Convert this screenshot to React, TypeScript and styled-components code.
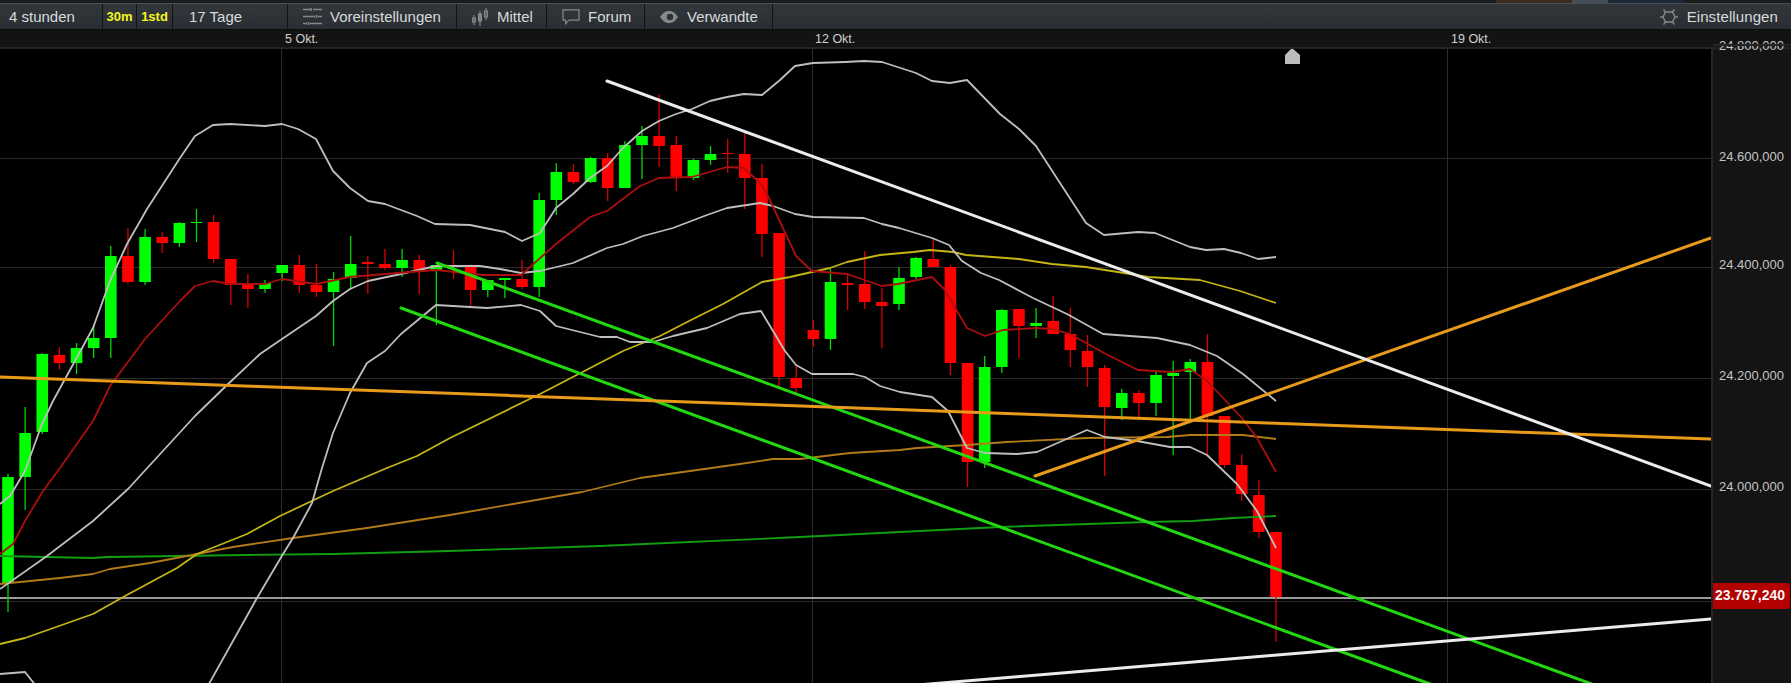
import React from "react";
import styled, { createGlobalStyle } from "styled-components";

const Global = createGlobalStyle`
  html, body { margin: 0; padding: 0; background: #000; }
  body { font-family: "Liberation Sans", Arial, sans-serif; }
`;

const Page = styled.div`
  width: 1791px;
  height: 683px;
  overflow: hidden;
  background: #000;
  display: flex;
  flex-direction: column;
`;

const TopStrip = styled.div`
  height: 3px;
  background: #1b1c1d;
  display: flex;
  justify-content: flex-end;
  border-bottom: 1px solid #4a4e51;
  box-sizing: content-box;
`;

const StripTab = styled.div<{ $w: number; $c: string }>`
  width: ${(p) => p.$w}px;
  background: ${(p) => p.$c};
`;

const StripEnd = styled.div`
  width: 107px;
`;

const Toolbar = styled.div`
  height: 25px;
  display: flex;
  align-items: stretch;
  background: linear-gradient(#32373b, #2a2e32);
  border-bottom: 1px solid #0c0c0c;
  color: #d6dadc;
  font-size: 15px;
`;

const Section = styled.div<{ $w: number; $pad?: number; $gap?: number }>`
  width: ${(p) => p.$w}px;
  box-sizing: border-box;
  padding-left: ${(p) => p.$pad ?? 0}px;
  display: flex;
  align-items: center;
  gap: ${(p) => p.$gap ?? 0}px;
  border-right: 1px solid #101214;
`;

const YellowSection = styled(Section)`
  justify-content: center;
  color: #f6f61e;
  font-weight: 700;
  font-size: 13px;
`;

const Spacer = styled.div`
  flex: 1;
`;

const RightSection = styled.div`
  display: flex;
  align-items: center;
  gap: 9px;
  padding-right: 13px;
  letter-spacing: 0.1px;
`;

const Icon = styled.svg`
  display: block;
  flex: none;
  fill: none;
  stroke: #85898c;
`;

const DateBar = styled.div`
  height: 17px;
  background: #131313;
  border-bottom: 2px solid #242424;
  position: relative;
  color: #cfcfcf;
  font-size: 12.5px;
`;

const DateLabel = styled.span<{ $x: number }>`
  position: absolute;
  left: ${(p) => p.$x}px;
  top: 1px;
  line-height: 16px;
`;

const Main = styled.div`
  flex: 1;
  display: flex;
  min-height: 0;
`;

const Plot = styled.svg`
  display: block;
  flex: none;
  width: 1711px;
  height: 635px;
  filter: blur(0.35px);
`;

const Axis = styled.div`
  flex: 1;
  position: relative;
  background: #141414;
  border-left: 2px solid #272727;
  box-sizing: border-box;
  color: #c4c4c4;
  font-size: 13px;
`;

const Price = styled.span<{ $y: number }>`
  position: absolute;
  left: 6px;
  top: ${(p) => p.$y - 48 - 8}px;
  line-height: 16px;
`;

const ClippedPrice = styled(Price)`
  &::after {
    content: "";
    position: absolute;
    left: -6px;
    right: -8px;
    top: 6px;
    height: 2px;
    background: #242424;
  }
`;

const Current = styled.span`
  position: absolute;
  left: 0;
  right: 1px;
  top: 534px;
  height: 26px;
  background: #b30000;
  border-radius: 0 3px 3px 0;
  color: #f4f4f4;
  font-size: 14px;
  font-weight: 700;
  line-height: 25px;
  padding-left: 2px;
  box-sizing: border-box;
`;

const GridLine = styled.line`
  stroke: #2b2b2b;
  stroke-width: 1;
`;

const Wick = styled.line<{ $up: boolean }>`
  stroke: ${(p) => (p.$up ? "#00d800" : "#d80000")};
  stroke-width: 1.3;
`;

const Body = styled.rect<{ $up: boolean }>`
  fill: ${(p) => (p.$up ? "#00ff00" : "#ff0000")};
`;

const Curve = styled.polyline<{ $c: string }>`
  fill: none;
  stroke: ${(p) => p.$c};
  stroke-width: 1.8;
  stroke-linejoin: round;
`;

const Trend = styled.line<{ $c: string }>`
  stroke: ${(p) => p.$c};
  stroke-width: 3;
  stroke-linecap: round;
`;

const PriceLine = styled.line`
  stroke: #9a9a9a;
  stroke-width: 1.8;
`;

const Marker = styled.polygon`
  fill: #bcbcbc;
`;

type C = [number, number, number, number, 0 | 1];
const candles: C[] = [
  [473, 476, 582, 611, 1], [406, 432, 476, 509, 1], [352, 353, 431, 433, 1], [346, 354, 362, 369, 0],
  [342, 347, 362, 373, 1], [323, 337, 347, 357, 1], [245, 255, 337, 357, 1], [227, 255, 281, 283, 0],
  [228, 236, 281, 284, 1], [231, 236, 242, 252, 0], [221, 222, 242, 246, 1], [208, 221, 222, 241, 1],
  [214, 221, 258, 262, 0], [258, 258, 284, 304, 0], [273, 284, 288, 307, 0], [279, 282, 288, 292, 1],
  [264, 264, 272, 280, 1], [254, 264, 284, 292, 0], [263, 284, 291, 296, 0], [271, 278, 291, 345, 1],
  [235, 263, 277, 289, 1], [255, 261, 263, 293, 0], [248, 263, 267, 269, 0], [248, 259, 267, 276, 1],
  [254, 259, 271, 293, 0], [264, 264, 269, 324, 1], [249, 264, 265, 278, 0], [266, 266, 289, 305, 0],
  [279, 279, 289, 296, 1], [277, 277, 279, 297, 1], [259, 278, 286, 288, 0], [192, 199, 286, 296, 1],
  [162, 171, 199, 214, 1], [163, 171, 181, 183, 0], [156, 157, 181, 182, 1], [152, 157, 187, 200, 0],
  [140, 144, 187, 187, 1], [125, 135, 144, 178, 1], [93, 135, 145, 166, 0], [135, 144, 177, 190, 0],
  [158, 159, 177, 179, 1], [145, 153, 159, 164, 1], [138, 152, 153, 172, 0], [132, 153, 177, 208, 0],
  [163, 177, 233, 256, 0], [232, 232, 376, 386, 0], [364, 377, 387, 392, 0], [319, 329, 338, 346, 0],
  [268, 281, 338, 349, 1], [272, 282, 284, 309, 0], [250, 283, 301, 308, 0], [287, 301, 305, 347, 0],
  [266, 277, 303, 309, 1], [256, 257, 276, 278, 1], [237, 258, 266, 266, 0], [264, 266, 362, 374, 0],
  [362, 362, 461, 486, 0], [355, 366, 461, 467, 1], [308, 309, 366, 372, 1], [308, 308, 325, 357, 0],
  [307, 322, 325, 337, 1], [295, 320, 333, 333, 0], [307, 333, 349, 366, 0], [334, 350, 366, 386, 0],
  [364, 367, 406, 475, 0], [388, 392, 407, 419, 1], [389, 392, 402, 416, 0], [371, 374, 402, 415, 1],
  [360, 372, 375, 454, 1], [358, 361, 371, 418, 1], [333, 361, 415, 453, 0], [415, 415, 464, 467, 0],
  [453, 464, 493, 500, 0], [479, 494, 531, 537, 0], [531, 531, 596, 641, 0],
];

const upper = "0,503 10,495 25,470 42,423 53,400 93,327 110,280 127,243 147,208 180,157 195,135 213,124 230,123 265,125 282,123 298,128 316,138 333,170 350,187 368,200 385,203 417,215 435,223 470,224 505,231 522,240 540,232 556,207 573,193 590,177 607,165 623,147 642,130 659,120 676,113 692,108 710,100 727,96 744,93 762,94 780,79 795,65 813,62 845,61 864,60 882,61 916,72 932,80 950,82 967,79 1000,113 1019,128 1036,145 1086,222 1104,234 1138,231 1155,232 1190,246 1206,249 1224,248 1241,252 1258,258 1276,256";
const middle = "0,588 47,555 93,520 128,488 195,415 226,385 260,353 282,338 316,315 333,300 350,288 368,280 401,273 436,265 480,265 500,268 521,272 540,270 573,262 607,247 623,243 643,235 673,227 707,214 727,207 760,202 773,205 795,213 813,216 864,217 882,223 899,227 932,237 949,244 962,260 981,272 999,279 1033,297 1067,313 1103,333 1157,337 1190,344 1217,355 1243,373 1276,400";
const lower = "0,673 25,671 40,690 205,690 257,597 283,553 293,537 312,502 322,467 333,432 350,392 367,362 385,350 401,333 436,304 487,307 521,304 540,310 556,325 600,336 617,336 630,341 653,341 673,335 707,327 740,313 761,310 773,330 785,350 796,364 812,373 853,373 865,376 880,385 900,391 932,396 948,410 967,447 985,452 1017,453 1037,451 1087,429 1105,436 1137,440 1170,446 1190,446 1207,454 1237,483 1257,510 1276,547";
const red = "0,553 13,543 25,520 43,490 60,467 93,420 110,385 145,338 180,300 195,285 213,280 230,283 265,283 282,278 316,283 350,276 385,273 436,269 483,274 521,274 556,243 590,216 607,210 640,185 659,177 692,176 727,166 744,167 761,183 767,193 796,255 812,270 847,273 882,285 898,283 932,276 944,288 967,327 985,335 1003,329 1036,327 1052,328 1070,333 1104,352 1138,369 1172,371 1190,368 1207,380 1242,417 1257,437 1276,471";
const yellow = "0,643 25,637 93,613 125,595 177,567 197,553 247,533 280,515 333,490 387,467 417,455 450,437 540,393 623,350 660,335 693,318 723,303 762,281 790,276 812,271 830,267 847,261 880,254 913,251 930,249 953,251 966,254 1019,258 1052,263 1086,266 1124,272 1148,276 1200,279 1240,290 1276,302";
const brown = "0,583 60,577 93,573 110,568 150,562 197,553 233,546 293,537 367,527 450,514 582,491 640,477 740,463 773,458 800,458 850,452 900,449 917,447 967,444 1007,441 1087,437 1167,436 1190,434 1243,434 1276,438";
const green = "0,555 93,557 107,556 247,554 333,553 450,550 600,545 800,536 1000,526 1147,521 1193,520 1233,517 1276,515";

const hGrid = [157, 266, 377, 488, 600];
const vGrid = [281, 812, 1447];

const Sliders = () => (
  <Icon width="19" height="17" viewBox="0 0 19 17" strokeWidth="1.6">
    <path d="M0 1.5h7M10 1.5h9M8 0v3M0 8.5h12M15 8.5h4M13.5 7v3M0 15.5h4M7 15.5h12M5.5 14v3" />
  </Icon>
);

const CandleIcon = () => (
  <Icon width="18" height="18" viewBox="0 0 18 18" strokeWidth="1.1">
    <path d="M3 7v10M9 3v15M15 0v12" />
    <rect x="1.5" y="10" width="3" height="4" />
    <rect x="7.5" y="6" width="3" height="7" fill="#85898c" />
    <rect x="13.5" y="3" width="3" height="6" />
  </Icon>
);

const Bubble = () => (
  <Icon width="18" height="16" viewBox="0 0 18 16" strokeWidth="1.2">
    <path d="M1 .8h16v10.4H7L3.6 14.6v-3.4H1z" />
  </Icon>
);

const Eye = () => (
  <Icon width="18" height="12" viewBox="0 0 18 12" strokeWidth="0">
    <path d="M0 6C3 1.5 6 0 9 0s6 1.5 9 6c-3 4.5-6 6-9 6s-6-1.5-9-6z" fill="#85898c" />
    <circle cx="10" cy="6" r="3.2" fill="#2d3135" />
  </Icon>
);

const Gear = () => (
  <Icon width="18" height="16" viewBox="0 0 18 16" strokeWidth="1.4">
    <path d="M5.5 3h7L15 8l-2.5 5h-7L3 8z" />
    <path d="M5.5 3 3.5 .5M12.5 3l2-2.5M5.5 13l-2 2.5M12.5 13l2 2.5M3 8H0M15 8h3" />
  </Icon>
);

export default function App() {
  return (
    <Page>
      <Global />
      <TopStrip>
        <StripTab $w={76} $c="#3a2a20" />
        <StripTab $w={36} $c="#464c58" />
        <StripTab $w={76} $c="#1a2a3a" />
        <StripEnd />
      </TopStrip>
      <Toolbar>
        <Section $w={103} $pad={9}>4 stunden</Section>
        <YellowSection $w={34}>30m</YellowSection>
        <YellowSection $w={36}>1std</YellowSection>
        <Section $w={115} $pad={16}>17 Tage</Section>
        <Section $w={169} $pad={15} $gap={8}><Sliders />Voreinstellungen</Section>
        <Section $w={90} $pad={14} $gap={8}><CandleIcon />Mittel</Section>
        <Section $w={98} $pad={15} $gap={8}><Bubble />Forum</Section>
        <Section $w={128} $pad={15} $gap={9}><Eye />Verwandte</Section>
        <Spacer />
        <RightSection><Gear />Einstellungen</RightSection>
      </Toolbar>
      <DateBar>
        <DateLabel $x={285}>5 Okt.</DateLabel>
        <DateLabel $x={815}>12 Okt.</DateLabel>
        <DateLabel $x={1451}>19 Okt.</DateLabel>
      </DateBar>
      <Main>
        <Plot viewBox="0 48 1711 635">
          {hGrid.map((y) => <GridLine key={y} x1={0} x2={1711} y1={y + 0.5} y2={y + 0.5} />)}
          {vGrid.map((x) => <GridLine key={x} x1={x + 0.5} x2={x + 0.5} y1={48} y2={683} />)}
          <PriceLine x1={0} x2={1711} y1={597} y2={597} />
          {candles.map(([wt, bt, bb, wb, up], i) => {
            const x = 8 + 17.135 * i;
            return (
              <g key={i}>
                <Wick $up={!!up} x1={x} x2={x} y1={wt} y2={wb} />
                <Body $up={!!up} x={x - 5.8} y={bt} width={11.6} height={Math.max(bb - bt, 1)} />
              </g>
            );
          })}
          <Curve $c="#109f10" points={green} />
          <Curve $c="#b27a18" points={brown} />
          <Curve $c="#c4b414" points={yellow} />
          <Curve $c="#bebebe" points={upper} />
          <Curve $c="#bebebe" points={middle} />
          <Curve $c="#bebebe" points={lower} />
          <Curve $c="#ac0e0e" points={red} />
          <Trend $c="#22d80f" x1={437} y1={262} x2={1600} y2={686} />
          <Trend $c="#22d80f" x1={401} y1={307} x2={1430} y2={683} />
          <Trend $c="#e89a1a" x1={-2} y1={376} x2={1711} y2={438} />
          <Trend $c="#e89a1a" x1={1035} y1={475} x2={1711} y2={237} />
          <Trend $c="#ececec" x1={607} y1={80} x2={1711} y2={485} />
          <Trend $c="#ececec" x1={905} y1={685} x2={1711} y2={618} />
          <Marker points="1292,47 1300,54 1300,63 1285,63 1285,54" />
        </Plot>
        <Axis>
          <ClippedPrice $y={45}>24.800,000</ClippedPrice>
          <Price $y={156}>24.600,000</Price>
          <Price $y={264}>24.400,000</Price>
          <Price $y={375}>24.200,000</Price>
          <Price $y={486}>24.000,000</Price>
          <Current>23.767,240</Current>
        </Axis>
      </Main>
    </Page>
  );
}
